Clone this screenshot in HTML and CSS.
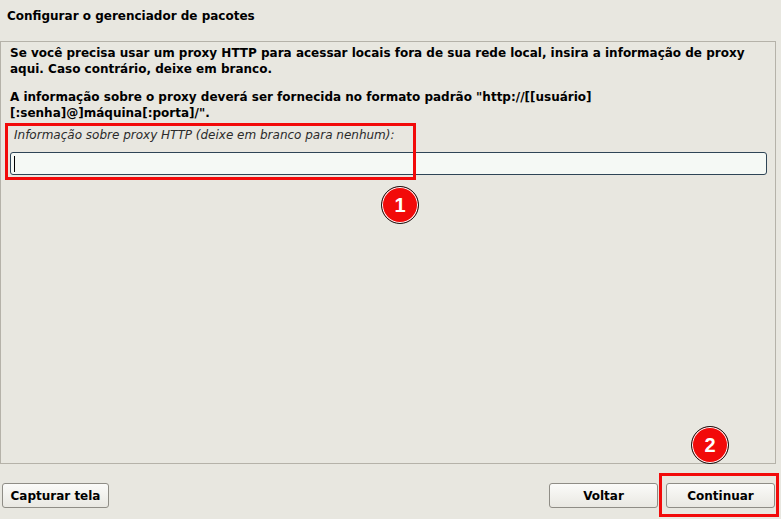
FILE: index.html
```html
<!DOCTYPE html>
<html lang="pt">
<head>
<meta charset="utf-8">
<link rel="stylesheet" href="styles.css">
</head>
<body>
<div class="app">
  <h1 class="title">Configurar o gerenciador de pacotes</h1>
  <div class="panel">
    <p class="para">Se você precisa usar um proxy HTTP para acessar locais fora de sua rede local, insira a informação de proxy aqui. Caso contrário, deixe em branco.</p>
    <p class="para">A informação sobre o proxy deverá ser fornecida no formato padrão "http://[[usuário][:senha]@]máquina[:porta]/".</p>
    <div class="field">
      <div class="label">Informação sobre proxy HTTP (deixe em branco para nenhum):</div>
      <div class="input"><span class="caret"></span></div>
      <div class="mark mark1"></div>
      <div class="badge badge1">1</div>
    </div>
  </div>
  <div class="footer">
    <button class="btn btn-shot">Capturar tela</button>
    <div class="spacer"></div>
    <button class="btn btn-back">Voltar</button>
    <button class="btn btn-next">Continuar</button>
    <div class="mark mark2"></div>
    <div class="badge badge2">2</div>
  </div>
</div>
</body>
</html>
```
FILE: styles.css
```css
html, body {
  margin: 0;
  padding: 0;
}
body {
  background: #e8e7e0;
  font-family: "DejaVu Sans", sans-serif;
  color: #000;
  width: 781px;
  height: 519px;
  overflow: hidden;
}
.app {
  position: relative;
  display: flex;
  flex-direction: column;
  height: 519px;
}
.title {
  font-size: 12px;
  font-weight: bold;
  margin: 0;
  padding: 8px 0 0 7px;
  height: 41px;
  box-sizing: border-box;
  line-height: 16px;
  flex: none;
}
.panel {
  margin: 0 5px 0 0;
  height: 423px;
  flex: none;
  box-sizing: border-box;
  border: 1px solid #b5b2a9;
  padding: 3px 8px 0 9px;
}
.para {
  font-size: 12px;
  font-weight: bold;
  line-height: 16px;
  margin: 0 0 12px 0;
}
.para + .para {
  margin-bottom: 5px;
}
.field {
  position: relative;
}
.label {
  font-style: italic;
  font-size: 12px;
  color: #2b2b2b;
  line-height: 16px;
  padding: 1px 0 0 4px;
  height: 26px;
  box-sizing: border-box;
}
.input {
  height: 23px;
  box-sizing: border-box;
  border: 1px solid #2e4556;
  border-radius: 3px;
  background: #f5f9f5;
  display: flex;
  align-items: center;
  padding-left: 3px;
}
.caret {
  width: 1px;
  height: 16px;
  background: #000;
}
.footer {
  position: relative;
  display: flex;
  align-items: flex-start;
  padding: 19px 6px 0 2px;
  gap: 8px;
}
.spacer {
  flex: 1;
}
.btn {
  font-family: "DejaVu Sans", sans-serif;
  font-size: 12px;
  font-weight: bold;
  color: #000;
  height: 25px;
  border: 1px solid #8f8d86;
  border-radius: 3px;
  background: linear-gradient(#fbfbf9, #e9e8e2);
  padding: 0;
  margin: 0;
  white-space: nowrap;
  flex: none;
}
.btn-shot {
  width: 107px;
}
.btn-back, .btn-next {
  width: 109px;
}
.mark {
  position: absolute;
  border: 3px solid #f20a0a;
  box-sizing: border-box;
}
.mark1 {
  left: -5px;
  top: -3px;
  width: 411px;
  height: 57px;
}
.mark2 {
  left: 659px;
  top: 9px;
  width: 120px;
  height: 44px;
}
.badge {
  position: absolute;
  width: 38px;
  height: 38px;
  border-radius: 50%;
  background: #f20a0a;
  border: 1px solid #1a1a1a;
  box-shadow: inset 0 0 0 1px #fff;
  box-sizing: border-box;
  color: #fff;
  font-family: "Liberation Sans", sans-serif;
  font-weight: bold;
  font-size: 20px;
  display: flex;
  align-items: center;
  justify-content: center;
}
.badge1 {
  left: 371px;
  top: 60px;
}
.badge2 {
  left: 691px;
  top: -38px;
}
```
